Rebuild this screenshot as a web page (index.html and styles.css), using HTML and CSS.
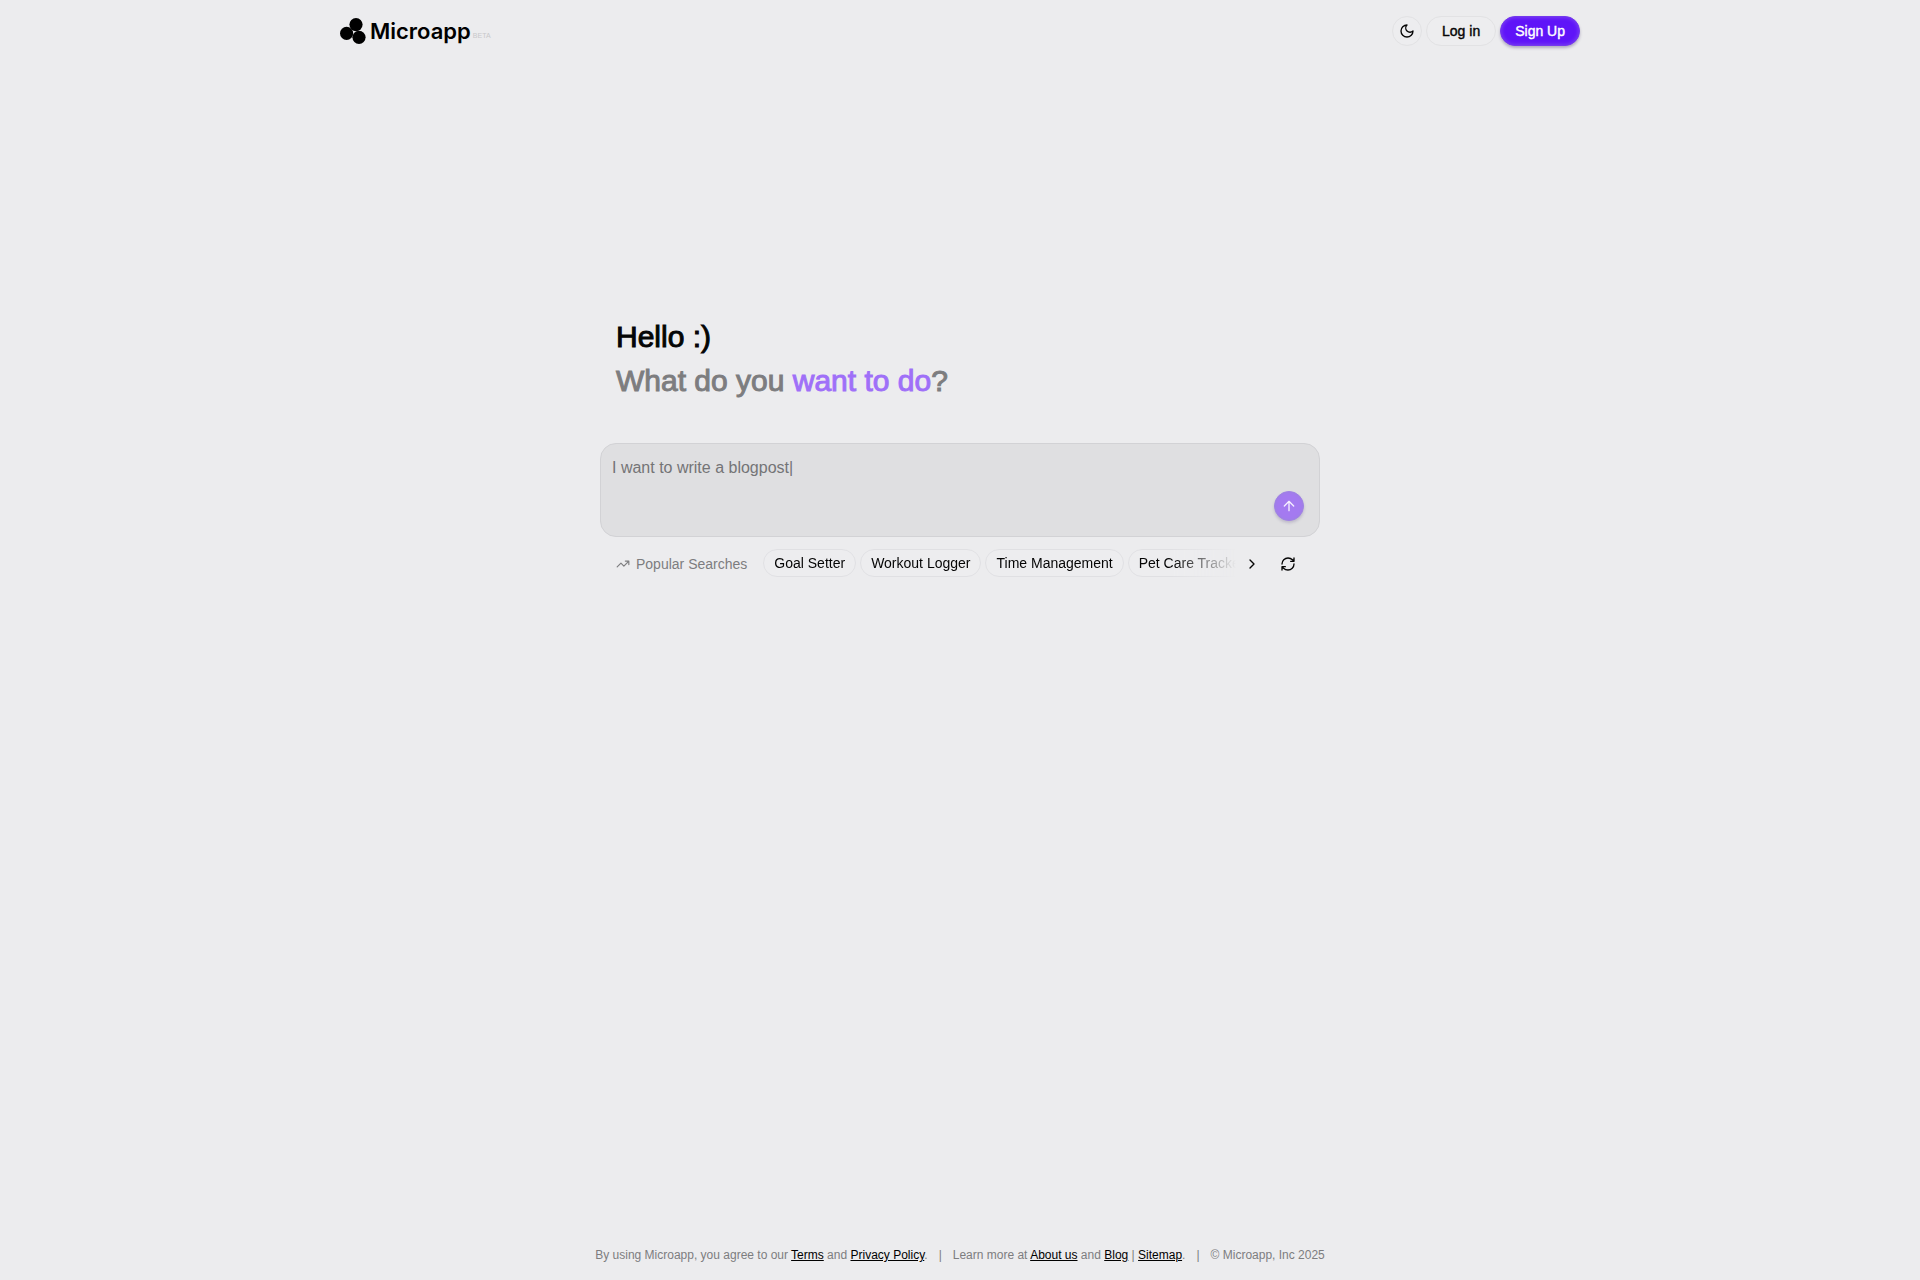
FILE: index.html
```html
<!DOCTYPE html>
<html lang="en">
<head>
<meta charset="utf-8">
<meta name="viewport" content="width=device-width, initial-scale=1">
<title>Microapp</title>
<link rel="stylesheet" href="styles.css">
</head>
<body>
<header class="header">
  <a class="logo" href="#">
    <svg class="logo-mark" viewBox="0 0 26 26" aria-hidden="true"><circle cx="16" cy="6.600" r="6.600"/><circle cx="6.600" cy="15.300" r="6.600"/><circle cx="19" cy="19.300" r="6.600"/></svg>
    <span class="logo-name">Microapp</span>
    <span class="logo-tag">BETA</span>
  </a>
  <nav class="actions">
    <button class="button button-round" type="button" aria-label="Toggle theme">
      <svg class="icon" viewBox="0 0 24 24" aria-hidden="true"><path d="M12 3a6 6 0 0 0 9 9 9 9 0 1 1-9-9Z"/></svg>
    </button>
    <button class="button" type="button">Log in</button>
    <button class="button button-primary" type="button">Sign Up</button>
  </nav>
</header>
<main class="main">
  <h1 class="greeting">Hello :)<br><span class="question">What do you <span class="accent">want to do</span>?</span></h1>
  <form class="prompt">
    <textarea class="prompt-input" aria-label="What do you want to do?" placeholder="I want to write a blogpost|"></textarea>
    <button class="send" type="button" aria-label="Send">
      <svg class="icon" viewBox="0 0 24 24" aria-hidden="true"><path d="m5 12 7-7 7 7M12 19V5"/></svg>
    </button>
  </form>
  <section class="popular">
    <h2 class="popular-title">
      <svg class="icon-small" viewBox="0 0 24 24" aria-hidden="true"><path d="m22 7-8.500 8.500-5-5L2 17M16 7h6v6"/></svg>
      Popular Searches
    </h2>
    <div class="chips">
      <button class="chip" type="button">Goal Setter</button>
      <button class="chip" type="button">Workout Logger</button>
      <button class="chip" type="button">Time Management</button>
      <button class="chip" type="button">Pet Care Tracker</button>
    </div>
    <button class="tool" type="button" aria-label="Next">
      <svg class="icon" viewBox="0 0 24 24" aria-hidden="true"><path d="m9 18 6-6-6-6"/></svg>
    </button>
    <button class="tool" type="button" aria-label="Refresh">
      <svg class="icon" viewBox="0 0 24 24" aria-hidden="true"><path d="M3 12a9 9 0 0 1 9-9 9.750 9.750 0 0 1 6.740 2.740L21 8M21 3v5h-5M21 12a9 9 0 0 1-9 9 9.750 9.750 0 0 1-6.740-2.740L3 16M8 16H3v5"/></svg>
    </button>
  </section>
</main>
<footer class="footer">
  <span>By using Microapp, you agree to our <a href="#">Terms</a> and <a href="#">Privacy Policy</a>.</span>
  <span>|</span>
  <span>Learn more at <a href="#">About us</a> and <a href="#">Blog</a> | <a href="#">Sitemap</a>.</span>
  <span>|</span>
  <span>© Microapp, Inc 2025</span>
</footer>
</body>
</html>
```
FILE: styles.css
```css
*,
*::before,
*::after {
  box-sizing: border-box;
}

body {
  margin: 0;
  min-height: 100vh;
  display: flex;
  flex-direction: column;
  background: #ececee;
  color: #050505;
  font-family: "Liberation Sans", Arial, sans-serif;
  font-size: 14px;
  line-height: 20px;
}

button,
textarea {
  font: inherit;
  color: inherit;
}

button {
  cursor: pointer;
}

svg {
  display: block;
  flex: none;
}

.icon,
.icon-small {
  width: 16px;
  height: 16px;
  fill: none;
  stroke: currentColor;
  stroke-width: 2;
  stroke-linecap: round;
  stroke-linejoin: round;
}

.icon-small {
  width: 14px;
  height: 14px;
}

.header {
  width: 100%;
  max-width: 1272px;
  margin: 0 auto;
  padding: 16px;
  display: flex;
  align-items: center;
  justify-content: space-between;
}

.logo {
  display: flex;
  align-items: center;
  color: #000;
  text-decoration: none;
}

.logo-mark {
  width: 26px;
  height: 26px;
  margin-right: 4px;
}

.logo-name {
  font-family: Inter, sans-serif;
  font-size: 22px;
  font-weight: 600;
  line-height: 30px;
}

.logo-tag {
  margin-left: 2px;
  padding-top: 10px;
  color: #c8c8ca;
  font-size: 7px;
  line-height: 10px;
}

.actions {
  display: flex;
  gap: 4px;
}

.button {
  height: 30px;
  padding: 0 15px;
  display: flex;
  align-items: center;
  justify-content: center;
  border: 1px solid #e2e2e4;
  border-radius: 15px;
  background: #ededef;
  -webkit-text-stroke: 0.4px currentColor;
}

.button-round {
  width: 30px;
  padding: 0;
}

.button-primary {
  padding: 0 14px;
  border-color: #7438ee;
  background: #5f14f8;
  color: #fff;
  box-shadow: 0 2px 3px rgba(40, 20, 90, 0.3), inset 0 0 4px #8450ee;
}

.main {
  width: 100%;
  max-width: 752px;
  margin: 0 auto;
  padding: 253px 16px 32px;
  flex: 1;
}

.greeting {
  margin: 0 16px 40px;
  font-size: 30px;
  font-weight: 400;
  line-height: 44px;
  -webkit-text-stroke: 1px currentColor;
}

.question {
  color: #7d7d7f;
}

.accent {
  color: #9f70f8;
}

.prompt {
  display: flex;
  align-items: flex-end;
  padding: 12px 15px 15px 11px;
  border: 1px solid #d2d2d5;
  border-radius: 16px;
  background: #dfdfe1;
}

.prompt-input {
  flex: 1;
  height: 65px;
  padding: 0;
  border: 0;
  outline: 0;
  resize: none;
  background: none;
  font-size: 16px;
  line-height: 24px;
}

.prompt-input::placeholder {
  color: #747476;
  opacity: 1;
}

.send {
  width: 30px;
  height: 30px;
  padding: 0;
  display: grid;
  place-items: center;
  border: 1px solid #9f82e4;
  border-radius: 50%;
  background: #a47af0;
  color: #f6f0ff;
  box-shadow: 0 2px 3px rgba(60, 40, 110, 0.2), inset 0 0 3px #9c84dc;
}

.popular {
  display: flex;
  align-items: center;
  padding: 11px 16px 0;
}

.popular-title {
  margin: 0 16px 0 0;
  display: flex;
  align-items: center;
  gap: 6px;
  color: #7d7d7f;
  font-size: 14px;
  font-weight: 400;
  line-height: 20px;
}

.chips {
  flex: 1;
  min-width: 0;
  display: flex;
  gap: 4px;
  padding: 1px 0 3px;
  overflow: hidden;
  -webkit-mask-image: linear-gradient(to right, #000 calc(100% - 64px), transparent);
  mask-image: linear-gradient(to right, #000 calc(100% - 64px), transparent);
}

.chip {
  flex: none;
  height: 28px;
  padding: 0 10px;
  border: 1px solid #e0e0e3;
  border-radius: 14px;
  background: #ededef;
  white-space: nowrap;
}

.tool {
  width: 32px;
  height: 32px;
  padding: 0;
  display: grid;
  place-items: center;
  border: 0;
  background: none;
}

.tool + .tool {
  margin-left: 4px;
}

.footer {
  display: flex;
  flex-wrap: wrap;
  justify-content: center;
  gap: 11px;
  padding: 16px 16px 17px;
  color: #7d7d7f;
  font-size: 12px;
  line-height: 16px;
}

.footer a {
  color: #000;
  text-underline-offset: 1px;
}
```
